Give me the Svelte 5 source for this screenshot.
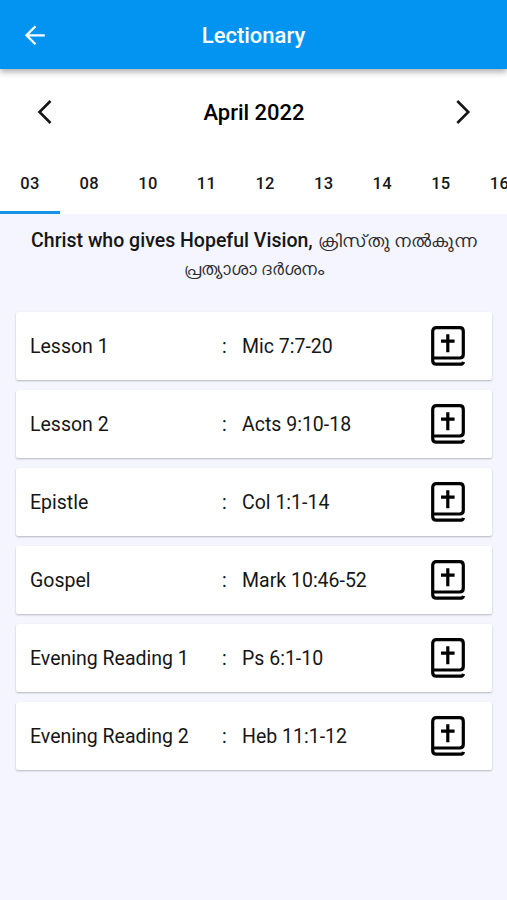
<script>
  const days = ['03', '08', '10', '11', '12', '13', '14', '15', '16'];

  const readings = [
    { label: 'Lesson 1', passage: 'Mic 7:7-20' },
    { label: 'Lesson 2', passage: 'Acts 9:10-18' },
    { label: 'Epistle', passage: 'Col 1:1-14' },
    { label: 'Gospel', passage: 'Mark 10:46-52' },
    { label: 'Evening Reading 1', passage: 'Ps 6:1-10' },
    { label: 'Evening Reading 2', passage: 'Heb 11:1-12' }
  ];

  let selected = $state('03');
</script>

<div class="screen">
  <header class="app-bar">
    <button class="back" aria-label="Back">
      <svg width="22" height="22" viewBox="0 0 22 22">
        <path d="M20.8 10.3H3M11.5 1.3l-9 9 9 9" />
      </svg>
    </button>
    <h1>Lectionary</h1>
  </header>

  <div class="month">
    <button aria-label="Previous month">
      <svg width="16" height="26" viewBox="0 0 16 26">
        <path d="M14.5 2 3.5 13l11 11" />
      </svg>
    </button>
    <h2>April 2022</h2>
    <button aria-label="Next month">
      <svg width="16" height="26" viewBox="0 0 16 26">
        <path d="M2.3 2l11 11-11 11" />
      </svg>
    </button>
  </div>

  <nav class="days">
    {#each days as day}
      <button class:active={day === selected} onclick={() => (selected = day)}>{day}</button>
    {/each}
  </nav>

  <main>
    <p class="theme">
      <strong>Christ who gives Hopeful Vision,</strong>
      <span class="first" lang="ml">ക്രിസ്&zwnj;ത&zwnj;ു നൽക&zwnj;ുന്ന</span><br />
      <span lang="ml">പ്രത്യാശാ ദർശനം</span>
    </p>

    <ul class="readings">
      {#each readings as { label, passage }}
        <li>
          <span class="label">{label}</span>
          <span class="colon">:</span>
          <span class="passage">{passage}</span>
          <svg class="bible" width="34" height="40" viewBox="0 0 34 40">
            <path
              class="cover"
              d="M32.5 35.8c-.4 1.6-1.5 2.4-3.2 2.4H5.5c-2.4 0-3.8-1.5-3.8-3.8V5.3c0-2.3 1.3-3.6 3.6-3.6h23.4c2.3 0 3.6 1.3 3.6 3.6v23c0 2.3-1.3 3.7-3.6 3.7H2"
            />
            <path class="cross" d="M16.8 8.3v18M10 15.2h13.6" />
          </svg>
        </li>
      {/each}
    </ul>
  </main>
</div>

<style>
  :global(body) {
    background: #f4f5fe;
  }

  .screen {
    height: 900px;
    overflow: hidden;
    background: #f4f5fe;
    color: #161616;
    font-family: Roboto, 'Liberation Sans', sans-serif;
  }

  button {
    padding: 0;
    border: 0;
    background: none;
    color: inherit;
    font: inherit;
    cursor: pointer;
  }

  svg {
    display: block;
    fill: none;
    stroke: currentColor;
  }

  h1,
  h2,
  p,
  ul {
    margin: 0;
    padding: 0;
  }

  .app-bar {
    position: relative;
    display: grid;
    grid-template-columns: 70px 1fr 70px;
    align-items: center;
    height: 69px;
    padding-top: 2px;
    box-sizing: border-box;
    background: #0394f1;
    color: #fff;
    box-shadow: 0 3px 6px rgba(0, 0, 0, 0.32);
  }

  .back {
    justify-self: center;
  }

  .back svg {
    stroke-width: 2.3;
  }

  h1 {
    font-size: 22px;
    font-weight: 500;
    line-height: 26px;
    text-align: center;
  }

  .month {
    display: flex;
    align-items: center;
    justify-content: space-between;
    height: 85px;
    padding: 1px 36px 0;
    box-sizing: border-box;
    background: #fff;
  }

  .month svg {
    stroke-width: 2.6;
  }

  h2 {
    padding-left: 1px;
    color: #000;
    font-size: 22px;
    font-weight: 500;
  }

  .days {
    display: flex;
    height: 60px;
    overflow: hidden;
    background: #fff;
  }

  .days button {
    flex: 0 0 58.6px;
    box-sizing: border-box;
    padding-top: 2px;
    border-bottom: 3px solid transparent;
    font-size: 16.5px;
    font-weight: 500;
    letter-spacing: 0.3px;
  }

  .days button.active {
    flex-basis: 60px;
    border-color: #1793e6;
  }

  main {
    padding: 13px 15px 0 16px;
  }

  .theme {
    height: 85px;
    font-size: 19.5px;
    line-height: 28px;
    text-align: center;
    white-space: nowrap;
  }

  .theme strong {
    font-weight: 500;
  }

  .theme span {
    color: #2c2c30;
    font-size: 17.4px;
  }

  .theme .first {
    font-size: 17.5px;
  }

  .readings {
    display: grid;
    gap: 10.1px;
    list-style: none;
  }

  .readings li {
    display: grid;
    grid-template-columns: 192px 20px 1fr 34px;
    align-items: center;
    height: 68px;
    padding: 0 27px 0 14px;
    box-sizing: border-box;
    border-radius: 2px;
    background: #fff;
    box-shadow: 0 1px 2px rgba(0, 0, 0, 0.25);
    font-size: 19.5px;
  }

  .bible {
    margin-top: -1px;
    color: #000;
  }

  .cover {
    stroke-width: 3.2;
    stroke-linejoin: round;
  }

  .cross {
    stroke-width: 3.2;
  }
</style>
